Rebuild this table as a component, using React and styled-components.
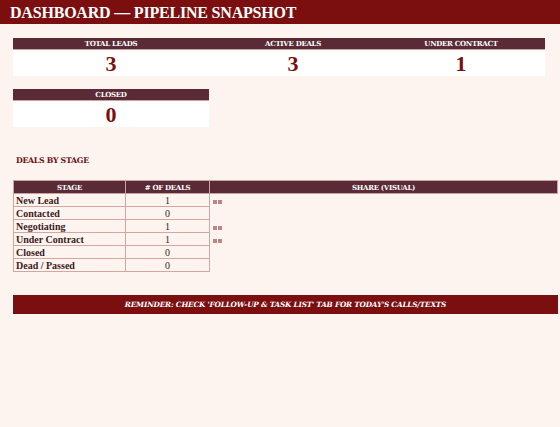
import React from 'react';
import styled, { createGlobalStyle } from 'styled-components';

const Global = createGlobalStyle`
   html, body {
      margin: 0;
      background: #fdf3ef;
   }
   * { box-sizing: border-box; }
`;

const Page = styled.div`
   width: 560px;
   height: 427px;
   background: #fdf3ef;
   font-family: "Liberation Serif", serif;
   overflow: hidden;
`;
const TitleBar = styled.div`
   height: 24px;
   background: #7b0f10;
   color: #ffffff;
   font-weight: bold;
   font-size: 16px;
   line-height: 25px;
   padding-left: 10px;
   letter-spacing: -0.2px;
`;
const Content = styled.div`
   padding: 14px 2px 0 13px;
`;
const CardRow = styled.div`
   display: flex;
   margin-bottom: ${p => p.$gap || 0}px;
`;
const Card = styled.div`
   width: ${p => p.$w}px;
   display: flex;
   flex-direction: column;
`;
const CardHead = styled.div`
   height: 12px;
   background: #5a2b36;
   border-bottom: 1px solid #c9a2a2;
   color: #ffffff;
   font-family: "DejaVu Serif", serif;
   font-weight: 900;
   font-size: 7px;
   line-height: 12px;
   text-align: center;
   letter-spacing: -0.3px;
`;
const CardValue = styled.div`
   height: 26px;
   background: #ffffff;
   color: #7b0f10;
   font-weight: bold;
   font-size: 22px;
   line-height: 28px;
   text-align: center;
`;
const SectionTitle = styled.div`
   margin: 29px 0 0 3px;
   height: 24px;
   color: #6b0f12;
   font-family: "DejaVu Serif", serif;
   font-weight: bold;
   font-size: 7.8px;
   letter-spacing: -0.3px;
`;
const Table = styled.table`
   border-collapse: collapse;
   width: 545px;
   table-layout: fixed;
`;
const Th = styled.th`
   width: ${p => p.$w ? `${p.$w}px` : 'auto'};
   height: 13px;
   padding: 0;
   background: #5a2b36;
   border: 1px solid #c9a2a2;
   color: #ffffff;
   font-family: "DejaVu Serif", serif;
   font-weight: bold;
   font-size: 7px;
   letter-spacing: -0.3px;
   text-align: center;
`;
const Td = styled.td`
   height: 13px;
   padding: 0 0 0 ${p => p.$center ? 0 : 2}px;
   border: 1px solid #d3a79e;
   color: #3a1c22;
   font-size: 10px;
   line-height: 11px;
   text-align: ${p => p.$center ? 'center' : 'left'};
   font-weight: ${p => p.$center ? 'normal' : 'bold'};
`;
const ShareTd = styled.td`
   padding: 0 0 0 3px;
   border: none;
   border-left: 1px solid #d3a79e;
   line-height: 11px;
`;
const Dot = styled.span`
   display: inline-block;
   width: 4px;
   height: 4px;
   margin-right: 1px;
   background: #c08484;
   vertical-align: middle;
`;
const Reminder = styled.div`
   margin-top: 23px;
   height: 19px;
   background: #7b0f10;
   color: #ffffff;
   font-family: "DejaVu Serif", serif;
   font-weight: bold;
   font-style: italic;
   font-size: 7.3px;
   line-height: 20px;
   text-align: center;
   letter-spacing: -0.2px;
`;

const stages = [
   ['New Lead', 1],
   ['Contacted', 0],
   ['Negotiating', 1],
   ['Under Contract', 1],
   ['Closed', 0],
   ['Dead / Passed', 0],
];

function App() {
   return (
      <Page>
         <Global />
         <TitleBar>DASHBOARD — PIPELINE SNAPSHOT</TitleBar>
         <Content>
            <CardRow $gap={13}>
               <Card $w={196}><CardHead>TOTAL LEADS</CardHead><CardValue>3</CardValue></Card>
               <Card $w={168}><CardHead>ACTIVE DEALS</CardHead><CardValue>3</CardValue></Card>
               <Card $w={168}><CardHead>UNDER CONTRACT</CardHead><CardValue>1</CardValue></Card>
            </CardRow>
            <CardRow>
               <Card $w={196}><CardHead>CLOSED</CardHead><CardValue>0</CardValue></Card>
            </CardRow>
            <SectionTitle>DEALS BY STAGE</SectionTitle>
            <Table>
               <thead>
                  <tr>
                     <Th $w={112}>STAGE</Th>
                     <Th $w={84}># OF DEALS</Th>
                     <Th>SHARE (VISUAL)</Th>
                  </tr>
               </thead>
               <tbody>
                  {stages.map(([name, n]) => (
                     <tr key={name}>
                        <Td>{name}</Td>
                        <Td $center>{n}</Td>
                        <ShareTd>
                           {Array.from({ length: n * 2 }, (_, i) => <Dot key={i} />)}
                        </ShareTd>
                     </tr>
                  ))}
               </tbody>
            </Table>
            <Reminder>REMINDER: CHECK 'FOLLOW-UP &amp; TASK LIST' TAB FOR TODAY'S CALLS/TEXTS</Reminder>
         </Content>
      </Page>
   );
}

export default App;
